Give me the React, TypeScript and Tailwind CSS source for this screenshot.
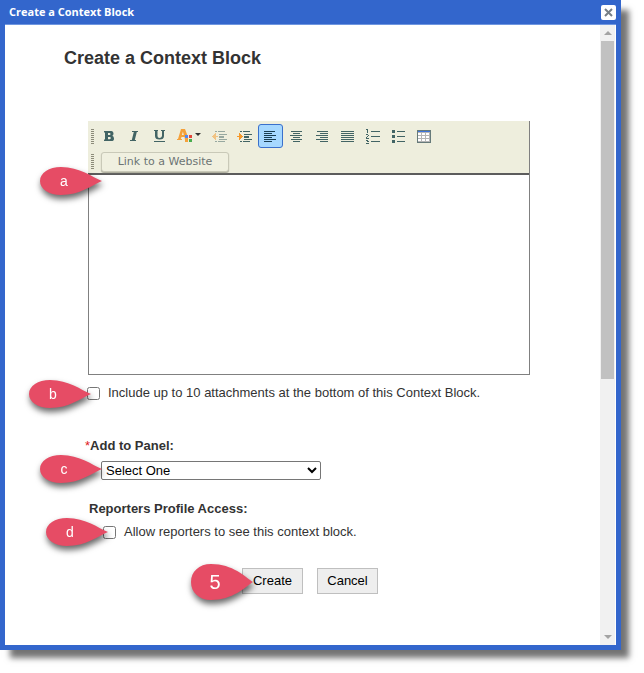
import type { ReactNode } from "react";

const ink = "#426464";

type CalloutProps = { label: string; className: string; large?: boolean };

const Callout = ({ label, className, large }: CalloutProps) => (
  <span
    className={`pointer-events-none absolute z-10 block w-[62px] text-white drop-shadow-[1px_4px_3px_rgba(0,0,0,0.6)] ${large ? "h-9" : "h-7"} ${className}`}
  >
    <svg viewBox="0 0 62 28" preserveAspectRatio="none" className="absolute inset-0 h-full w-full">
      <path
        d={
          large
            ? "M62 14C54 10 42 0 20 0C8 0 0 6 0 14S8 28 20 28C42 28 54 18 62 14Z"
            : "M62 14C52 10 40 0 21 0C9 0 0 6 0 14S9 28 21 28C40 28 52 18 62 14Z"
        }
        fill="#e64c65"
      />
    </svg>
    <span
      className={`relative flex h-full w-12 items-center justify-center ${large ? "text-xl" : "text-sm"}`}
    >
      {label}
    </span>
  </span>
);

type ToolProps = { name: string; active?: boolean; wide?: boolean; children: ReactNode };

const Tool = ({ name, active, wide, children }: ToolProps) => (
  <button
    type="button"
    aria-label={name}
    className={`flex h-6 items-center justify-center rounded-[3px] ${wide ? "w-[33px]" : "w-[25px]"} ${active ? "border border-[#3a70cc] bg-[#a6d8ff]" : ""}`}
  >
    {children}
  </button>
);

const Lines = ({ rows, color = ink }: { rows: number[][]; color?: string }) => (
  <svg width="13" height="13" viewBox="0 0 13 13" shapeRendering="crispEdges" fill={color}>
    {rows.map(([x, y, w]) => (
      <rect key={y} x={x} y={y} width={w} height="1" />
    ))}
  </svg>
);

const Indent = ({ outdent }: { outdent?: boolean }) => (
  <svg width="15" height="13" viewBox="0 0 15 13" shapeRendering="crispEdges" opacity={outdent ? 0.5 : 1}>
    <g fill={ink}>
      <path d="M3 1h2v1H3zM6 1h7v1H6zM7 4h8v1H7zM7 6h5v2H7zM7 9h8v1H7zM3 11h2v1H3zM6 11h7v1H6z" />
    </g>
    <path
      d={outdent ? "M0 6h1V5h1V4h1V3h1v3h2v1H4v3H3V9H2V8H1V7H0z" : "M0 6h2V3h1v1h1v1h1v1h1v1H5v1H4v1H3v1H2V7H0z"}
      fill="#f59a2c"
    />
  </svg>
);

const Grip = () => (
  <svg width="3" height="15" viewBox="0 0 3 15" shapeRendering="crispEdges" className="shrink-0">
    {[0, 2, 4, 6, 8, 10, 12, 14].map((y) => (
      <rect key={y} y={y} width="3" height="1" fill="#8c8b7a" />
    ))}
  </svg>
);

const Toolbar = () => (
  <div className="border-b-2 border-[#5c5c5c] bg-[#eeeedd] pt-px pl-[3px]">
    <div className="flex h-7 items-center gap-[2px]">
      <Grip />
      <div className="flex w-[341px] items-center justify-between">
        <Tool name="Bold">
          <svg width="10" height="10" viewBox="0 0 10 10" fill={ink}>
            <path
              fillRule="evenodd"
              d="M0 0h7.500Q9.500 0 9.500 2.500Q9.500 4.300 8.300 4.800Q10 5.300 10 7.400Q10 10 7.500 10H0V8.500h1V1.500H0zM4 2V4h1.500Q6.500 4 6.500 3Q6.500 2 5.500 2zM4 6v2.200h1.800Q6.800 8.200 6.800 7.100Q6.800 6 5.800 6z"
            />
          </svg>
        </Tool>
        <Tool name="Italic">
          <svg width="8" height="10" viewBox="0 0 8 10" fill={ink}>
            <path d="M2 0h6v1H6.800L4.800 9H6v1H0V9h1.800L3.800 1H2z" />
          </svg>
        </Tool>
        <Tool name="Underline">
          <svg width="11" height="12" viewBox="0 0 11 12" fill={ink}>
            <path d="M0 0h4v1H3.500v5Q3.500 8 5.500 8T8 6V1H7V0h4v1h-1v5q0 3.500-4.500 3.500T1 6V1H0zM0 11h11v1H0z" />
          </svg>
        </Tool>
        <Tool name="Text color" wide>
          <svg width="24" height="14" viewBox="0 0 24 14">
            <path
              fillRule="evenodd"
              d="M4 0h4l3 8v3H8L7.500 8H4.500L3.800 10H5v1H0v-1h1zM5.900 2.500L4.900 6h1.900z"
              fill="#f5a13a"
            />
            <path d="M8 6h3v3H8z" fill="#4f86f7" />
            <path d="M12 6h3v3h-3z" fill="#e2463a" />
            <path d="M8 10h3v3H8z" fill="#f5a13a" />
            <path d="M12 10h3v3h-3z" fill="#49ad4d" />
            <path d="M18 4h6l-3 3z" fill="#333" />
          </svg>
        </Tool>
        <Tool name="Decrease indent">
          <Indent outdent />
        </Tool>
        <Tool name="Increase indent">
          <Indent />
        </Tool>
        <Tool name="Align left" active>
          <Lines color="#183c50" rows={[[0, 1, 11], [0, 3, 8], [0, 5, 12], [0, 7, 8], [0, 9, 12], [0, 11, 8]]} />
        </Tool>
        <Tool name="Align center">
          <Lines rows={[[1, 1, 11], [3, 3, 7], [0, 5, 12], [3, 7, 7], [1, 9, 11], [3, 11, 7]]} />
        </Tool>
        <Tool name="Align right">
          <Lines rows={[[2, 1, 11], [5, 3, 8], [1, 5, 12], [5, 7, 8], [1, 9, 12], [5, 11, 8]]} />
        </Tool>
        <Tool name="Justify">
          <Lines rows={[[0, 1, 13], [0, 3, 13], [0, 5, 13], [0, 7, 13], [0, 9, 13], [0, 11, 13]]} />
        </Tool>
        <Tool name="Numbered list">
          <svg width="14" height="15" viewBox="0 0 14 15" shapeRendering="crispEdges" fill={ink}>
            <path d="M5 2h9v1H5zM5 7h9v1H5zM5 12h9v1H5z" />
            <path d="M0 0h2v4H1V1H0zM0 5h2v1h1v1H2v1H1v1h2v1H0V8h1V7h1V6H0zM0 11h2v1h1v1H2v1h1v1H0v-1h2v-1H1v-1H0z" />
          </svg>
        </Tool>
        <Tool name="Bulleted list">
          <svg width="13" height="13" viewBox="0 0 13 13" shapeRendering="crispEdges" fill={ink}>
            <path d="M0 0h3v3H0zM5 1h8v1H5zM0 5h3v3H0zM5 6h8v1H5zM0 10h3v3H0zM5 11h8v1H5z" />
          </svg>
        </Tool>
        <Tool name="Insert table">
          <svg width="14" height="13" viewBox="0 0 14 13" shapeRendering="crispEdges">
            <path d="M0 0h14v13H0z" fill="#667a7a" />
            <path d="M1 1h12v1H1z" fill="#3f74dd" />
            <path d="M1 2h12v10H1z" fill="#fff" />
            <path d="M1 2h12v1H1zM1 5h12v1H1zM1 8h12v1H1zM1 11h12v1H1zM4 3h1v9H4zM8 3h1v9H8zM12 3h1v9h-1z" fill="#b5b5b5" />
          </svg>
        </Tool>
      </div>
    </div>
    <div className="flex h-[23px] items-center gap-[7px]">
      <Grip />
      <button
        type="button"
        className="h-5 w-[128px] rounded-[3px] border border-[#c9c9b8] bg-[#f0f0e0] font-['DejaVu_Sans',sans-serif] text-[11px] leading-4 text-[#6c7474] shadow-[0_1px_1px_#a9a99a]"
      >
        Link to a Website
      </button>
    </div>
  </div>
);

const Scrollbar = () => (
  <div aria-hidden="true" className="flex w-[15px] shrink-0 flex-col bg-[#f1f1f1]">
    <div className="flex h-4 items-center justify-center">
      <svg width="8" height="4" viewBox="0 0 8 4" fill="#a3a3a3">
        <path d="M0 4L4 0L8 4z" />
      </svg>
    </div>
    <div className="mx-px flex-[23] bg-[#c1c1c1]" />
    <div className="flex-[17]" />
    <div className="flex h-4 items-center justify-center">
      <svg width="8" height="4" viewBox="0 0 8 4" fill="#a3a3a3">
        <path d="M0 0L4 4L8 0z" />
      </svg>
    </div>
  </div>
);

const App = () => (
  <main className="bg-white pr-[23px] pb-[23px] font-['Liberation_Sans',Arial,sans-serif] text-[13px] leading-5 text-[#333]">
    <section
      role="dialog"
      aria-labelledby="dialog-title"
      className="bg-[#3366cc] px-[5px] pb-[5px] shadow-[9px_9px_6px_-1px_rgba(0,0,0,0.55)]"
    >
      <header className="flex h-[25px] items-center justify-between border-b border-[#6f96e0] pl-1">
        <span
          id="dialog-title"
          className="font-['Open_Sans',sans-serif] text-[11px] font-bold text-white"
        >
          Create a Context Block
        </span>
        <button
          type="button"
          aria-label="Close"
          className="flex h-[15px] w-[15px] items-center justify-center rounded-[2px] bg-white"
        >
          <svg width="9" height="9" viewBox="0 0 9 9" stroke="#777f86" strokeWidth="2">
            <path d="M1 1L8 8M8 1L1 8" />
          </svg>
        </button>
      </header>

      <div className="flex bg-white pr-px">
        <form className="min-w-0 flex-1 pt-[21px] pb-[51px]">
          <h1 className="pl-[59px] text-lg leading-6 font-bold">Create a Context Block</h1>

          <div className="relative mt-[51px] mr-[70px] ml-[83px] border-r border-[#808080]">
            <Toolbar />
            <textarea
              aria-label="Context block content"
              className="block h-[200px] w-full resize-none border-b border-l border-[#808080] p-2 outline-none"
            />
            <Callout label="a" className="top-[46px] -left-12" />
          </div>

          <label className="relative mt-2 ml-[82px] flex items-center gap-2">
            <Callout label="b" className="-top-[3px] -left-[58px]" />
            <input type="checkbox" className="h-[13px] w-[13px]" />
            Include up to 10 attachments at the bottom of this Context Block.
          </label>

          <label htmlFor="panel" className="mt-[33px] ml-20 block font-bold">
            <span className="font-normal text-[#e01b1b]">*</span>Add to Panel:
          </label>
          <div className="relative mt-[5px] ml-24 flex">
            <Callout label="c" className="-top-[6px] -left-[61px]" />
            <select
              id="panel"
              className="h-[19px] w-[220px] rounded-[2px] border border-[#767676] bg-white text-[13px] leading-4 text-black"
            >
              <option>Select One</option>
            </select>
          </div>

          <h2 className="mt-[19px] ml-[84px] font-bold">Reporters Profile Access:</h2>
          <label className="relative mt-[3px] ml-[98px] flex items-center gap-2">
            <Callout label="d" className="-top-1 -left-[57px]" />
            <input type="checkbox" className="h-[13px] w-[13px]" />
            Allow reporters to see this context block.
          </label>

          <div className="relative mt-[26px] ml-[237px] flex gap-[14px] text-black">
            <Callout label="5" large className="-top-1 -left-[51px]" />
            <button type="submit" className="h-[26px] w-[61px] border border-[#bfbfbf] bg-[#eee]">
              Create
            </button>
            <button type="button" className="h-[26px] w-[61px] border border-[#bfbfbf] bg-[#eee]">
              Cancel
            </button>
          </div>
        </form>
        <Scrollbar />
      </div>
    </section>
  </main>
);

export default App;
